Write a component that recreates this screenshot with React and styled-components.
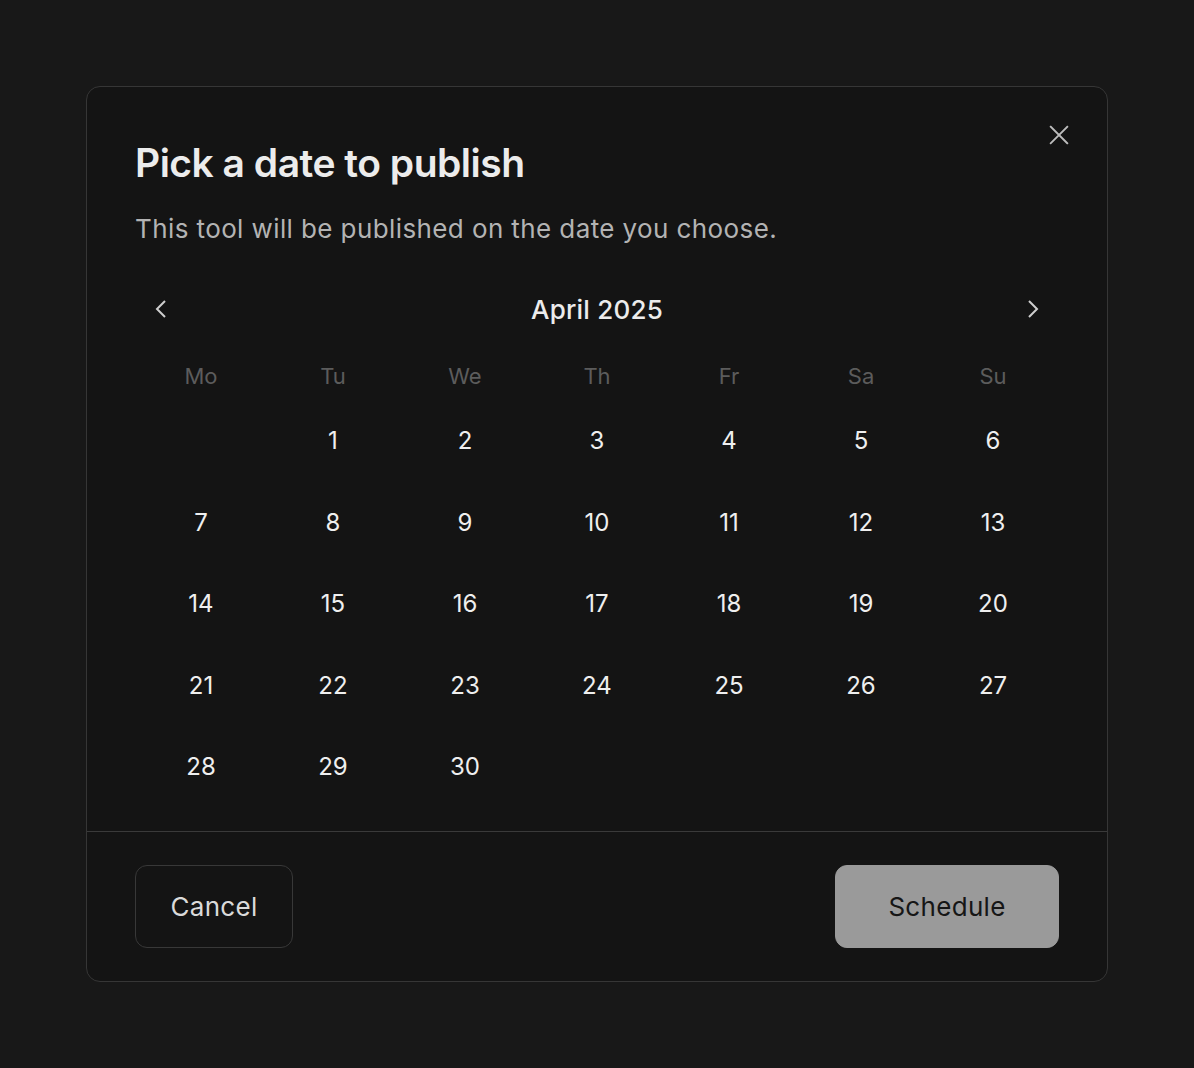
import React from 'react';
import styled, { createGlobalStyle } from 'styled-components';

const GlobalStyle = createGlobalStyle`
  html, body {
    margin: 0;
    padding: 0;
    background: #181818;
    font-family: Inter, "Noto Sans", sans-serif;
  }
`;

const Page = styled.div`
  width: 1194px;
  height: 1068px;
  box-sizing: border-box;
  padding: 86px 86px 0 86px;
`;

const Dialog = styled.div`
  position: relative;
  width: 1022px;
  height: 896px;
  box-sizing: border-box;
  background: #141414;
  border: 1px solid #363636;
  border-radius: 14px;
  display: flex;
  flex-direction: column;
`;

const Body = styled.div`
  flex: 1;
  padding: 52px 48px 0 48px;
`;

const Title = styled.h2`
  margin: 0;
  font-size: 39px;
  font-weight: 600;
  letter-spacing: -0.5px;
  color: #ececec;
  line-height: 48px;
`;

const Subtitle = styled.p`
  margin: 25px 0 0 0;
  font-size: 26px;
  letter-spacing: 0.4px;
  color: #b3b3b3;
  line-height: 34px;
`;

const Close = styled.button`
  position: absolute;
  top: 34px;
  right: 34px;
  width: 28px;
  height: 28px;
  padding: 0;
  border: none;
  background: transparent;
  color: #bdbdbd;
  display: flex;
  align-items: center;
  justify-content: center;
`;

const NavRow = styled.div`
  margin-top: 39px;
  height: 48px;
  display: flex;
  align-items: center;
  justify-content: space-between;
  padding: 0 16px;
`;

const NavButton = styled.button`
  width: 20px;
  height: 28px;
  padding: 0;
  border: none;
  background: transparent;
  color: #cfcfcf;
  display: flex;
  align-items: center;
  justify-content: center;
`;

const Month = styled.div`
  font-size: 26px;
  font-weight: 500;
  letter-spacing: 0.2px;
  color: #ececec;
`;

const Grid = styled.div`
  margin-top: 19px;
  display: grid;
  grid-template-columns: repeat(7, 132px);
`;

const WeekDay = styled.div`
  height: 48px;
  display: flex;
  align-items: center;
  justify-content: center;
  font-size: 22px;
  color: #5c5c5c;
`;

const Day = styled.div`
  height: 81.5px;
  display: flex;
  align-items: center;
  justify-content: center;
  font-size: 24px;
  color: #efefef;
`;

const Footer = styled.div`
  border-top: 1px solid #3a3a3a;
  padding: 33px 48px;
  display: flex;
  justify-content: space-between;
  align-items: center;
`;

const Button = styled.button`
  height: 83px;
  box-sizing: border-box;
  padding: 0;
  width: ${p => (p.$primary ? '224px' : '158px')};
  border-radius: 12px;
  font-family: inherit;
  font-size: 26px;
  font-weight: 400;
  letter-spacing: 0.3px;
  border: 1px solid ${p => (p.$primary ? '#9a9a9a' : '#383838')};
  background: ${p => (p.$primary ? '#9a9a9a' : '#141414')};
  color: ${p => (p.$primary ? '#161616' : '#dadada')};
`;

const weekDays = ['Mo', 'Tu', 'We', 'Th', 'Fr', 'Sa', 'Su'];
const days = [null, ...Array.from({ length: 30 }, (_, i) => i + 1)];

export default function App() {
  return (
    <Page>
      <GlobalStyle />
      <Dialog>
        <Close aria-label="Close">
          <svg width="22" height="22" viewBox="0 0 24 24" fill="none" stroke="currentColor" strokeWidth="2" strokeLinecap="square">
            <path d="M3 3l18 18M21 3L3 21" />
          </svg>
        </Close>
        <Body>
          <Title>Pick a date to publish</Title>
          <Subtitle>This tool will be published on the date you choose.</Subtitle>
          <NavRow>
            <NavButton aria-label="Previous month">
              <svg width="14" height="22" viewBox="0 0 14 22" fill="none" stroke="currentColor" strokeWidth="2">
                <path d="M11 3L3 11l8 8" />
              </svg>
            </NavButton>
            <Month>April 2025</Month>
            <NavButton aria-label="Next month">
              <svg width="14" height="22" viewBox="0 0 14 22" fill="none" stroke="currentColor" strokeWidth="2">
                <path d="M3 3l8 8-8 8" />
              </svg>
            </NavButton>
          </NavRow>
          <Grid>
            {weekDays.map(w => (
              <WeekDay key={w}>{w}</WeekDay>
            ))}
            {days.map((d, i) => (
              <Day key={i}>{d}</Day>
            ))}
          </Grid>
        </Body>
        <Footer>
          <Button>Cancel</Button>
          <Button $primary>Schedule</Button>
        </Footer>
      </Dialog>
    </Page>
  );
}
